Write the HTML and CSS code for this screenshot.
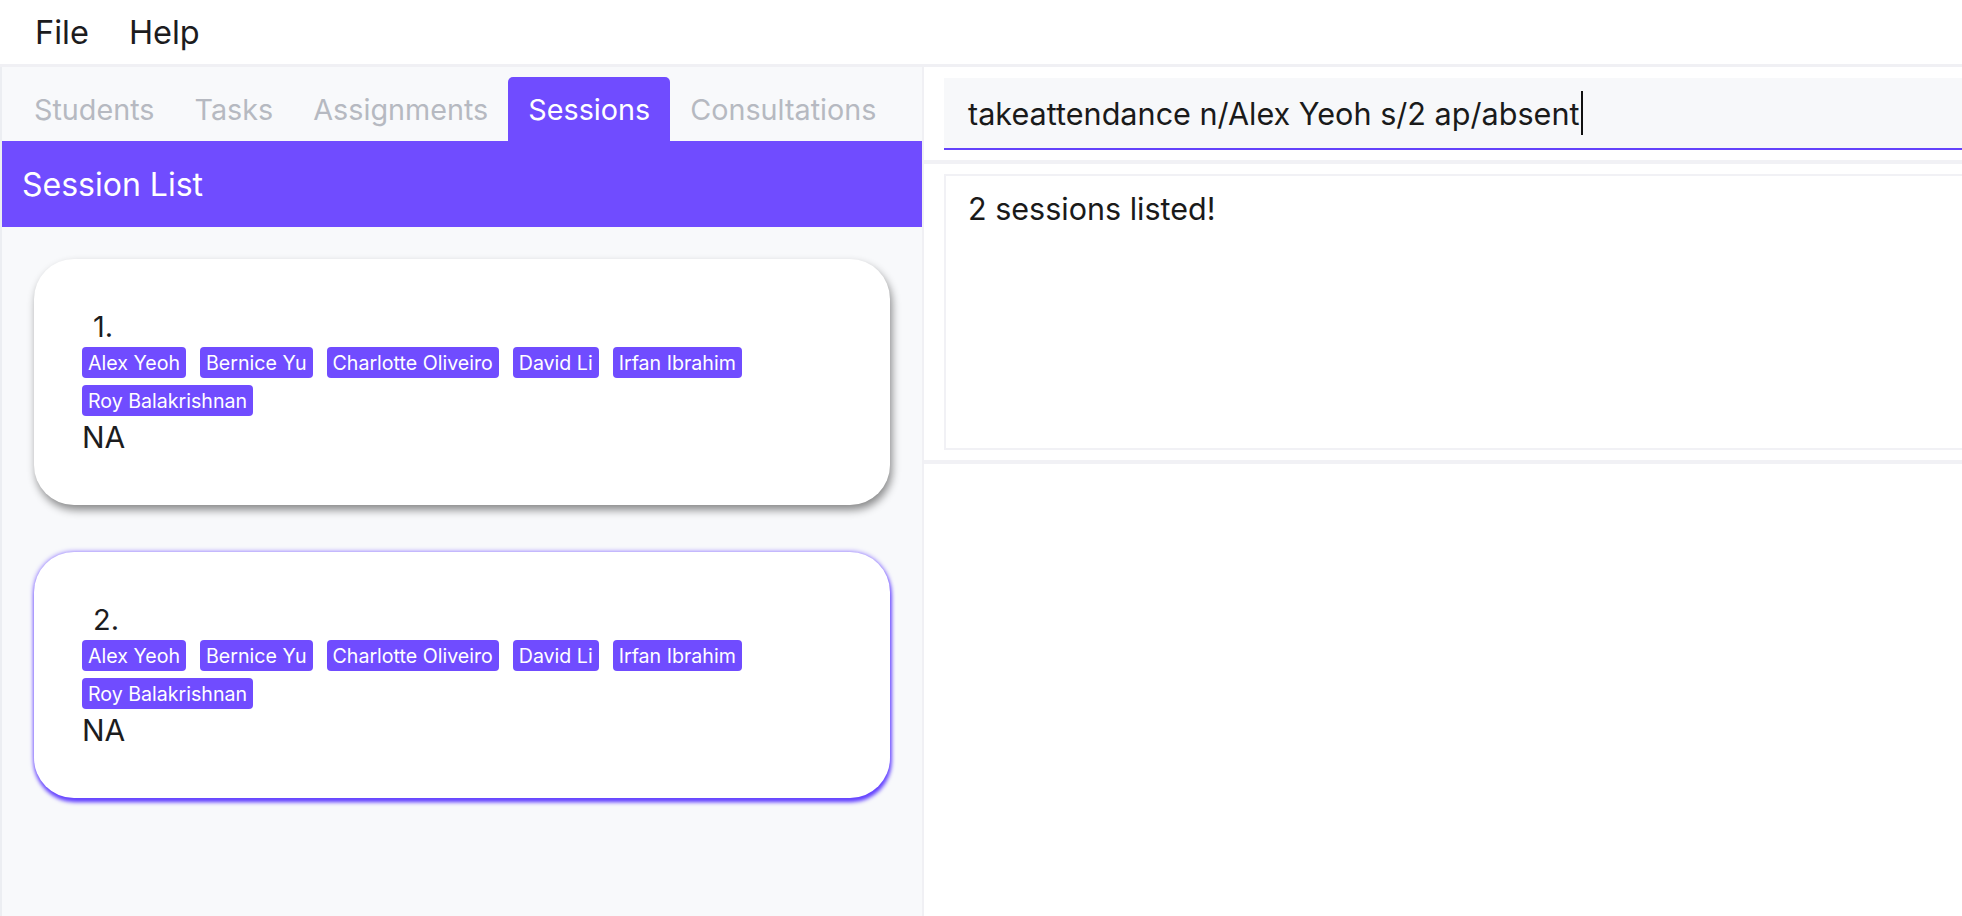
FILE: index.html
```html
<!DOCTYPE html>
<html lang="en">
<head>
<meta charset="utf-8">
<title>Sessions</title>
<link rel="stylesheet" href="styles.css">
</head>
<body>
<div class="app">
  <div class="menubar">
    <span class="menu-item">File</span>
    <span class="menu-item">Help</span>
  </div>
  <div class="main">
    <div class="left">
      <div class="tabs">
        <div class="tab">Students</div>
        <div class="tab">Tasks</div>
        <div class="tab">Assignments</div>
        <div class="tab active">Sessions</div>
        <div class="tab">Consultations</div>
      </div>
      <div class="list-header">Session List</div>
      <div class="list">
        <div class="card">
          <div class="card-id">1.</div>
          <div class="tags">
            <span class="tag">Alex Yeoh</span>
            <span class="tag">Bernice Yu</span>
            <span class="tag">Charlotte Oliveiro</span>
            <span class="tag">David Li</span>
            <span class="tag">Irfan Ibrahim</span>
            <span class="tag">Roy Balakrishnan</span>
          </div>
          <div class="card-note">NA</div>
        </div>
        <div class="card selected">
          <div class="card-id">2.</div>
          <div class="tags">
            <span class="tag">Alex Yeoh</span>
            <span class="tag">Bernice Yu</span>
            <span class="tag">Charlotte Oliveiro</span>
            <span class="tag">David Li</span>
            <span class="tag">Irfan Ibrahim</span>
            <span class="tag">Roy Balakrishnan</span>
          </div>
          <div class="card-note">NA</div>
        </div>
      </div>
    </div>
    <div class="right">
      <div class="cmd-section">
        <div class="cmd-field"><span class="cmd-text">takeattendance n/Alex Yeoh s/2 ap/absent</span><span class="caret"></span></div>
      </div>
      <div class="result-section">
        <div class="result-box">2 sessions listed!</div>
      </div>
      <div class="rest"></div>
    </div>
  </div>
</div>
</body>
</html>
```
FILE: styles.css
```css
html, body {
  margin: 0;
  padding: 0;
  background: #ffffff;
}
body {
  width: 1962px;
  height: 916px;
  overflow: hidden;
  font-family: Inter, "Noto Sans", sans-serif;
  color: #1c1c1e;
}
.app {
  display: flex;
  flex-direction: column;
  height: 916px;
}
.menubar {
  height: 64px;
  border-bottom: 3px solid #f0f0f4;
  display: flex;
  align-items: center;
  gap: 40px;
  padding-left: 35px;
  background: #ffffff;
}
.menu-item {
  font-size: 32.5px;
  color: #1c1c1e;
}
.main {
  flex: 1;
  display: flex;
  min-height: 0;
}
.left {
  width: 920px;
  border-left: 2px solid #eceef2;
  background: #f8f9fb;
  display: flex;
  flex-direction: column;
}
.tabs {
  height: 74px;
  display: flex;
  align-items: flex-end;
  padding-left: 12px;
}
.tab {
  height: 64px;
  padding: 0 20px;
  display: flex;
  align-items: center;
  font-size: 28.75px;
  color: #b6b9c1;
  border-radius: 5px 5px 0 0;
}
.tab.active {
  background: #704cff;
  color: #ffffff;
}
.list-header {
  height: 86px;
  background: #704cff;
  color: #ffffff;
  font-size: 32px;
  display: flex;
  align-items: center;
  padding-left: 20px;
}
.list {
  padding: 32px 32px;
  display: flex;
  flex-direction: column;
  gap: 47px;
}
.card {
  height: 246px;
  box-sizing: border-box;
  background: #ffffff;
  border-radius: 40px;
  padding: 50px 48px 0 48px;
  box-shadow: 2px 5px 8px rgba(0, 0, 0, 0.45);
}
.card.selected {
  box-shadow: 0 0 5px rgba(122, 92, 255, 0.95), 1px 4px 4px #5531ff;
}
.card-id {
  font-size: 29px;
  line-height: 36px;
  margin-left: 11px;
}
.tags {
  display: flex;
  flex-wrap: wrap;
  gap: 7px 14px;
  margin-top: 2px;
}
.tag {
  height: 31px;
  display: flex;
  align-items: center;
  padding: 0 6px;
  background: #704cff;
  color: #ffffff;
  font-size: 19.6px;
  border-radius: 4px;
}
.card-note {
  font-size: 30px;
  line-height: 36px;
  margin-top: 3px;
}
.right {
  flex: 1;
  border-left: 2px solid #f0f0f4;
  background: #ffffff;
  display: flex;
  flex-direction: column;
}
.cmd-section {
  padding: 11px 0 10px 20px;
  border-bottom: 4px solid #f1f1f5;
}
.cmd-field {
  height: 70px;
  background: #f7f8fa;
  border-bottom: 2px solid #6442fb;
  display: flex;
  align-items: center;
  padding-left: 24px;
  font-size: 30.6px;
  color: #1a1a1a;
}
.caret {
  display: inline-block;
  width: 2px;
  height: 44px;
  background: #111111;
  margin-left: 1px;
}
.result-section {
  padding: 10px 0 10px 20px;
  border-bottom: 4px solid #f1f1f5;
}
.result-box {
  border: 2px solid #f1f1f5;
  border-right: none;
  padding: 14px 0 0 22px;
  font-size: 30.5px;
  color: #1a1a1a;
  height: 258px;
}
.rest {
  flex: 1;
}
```
